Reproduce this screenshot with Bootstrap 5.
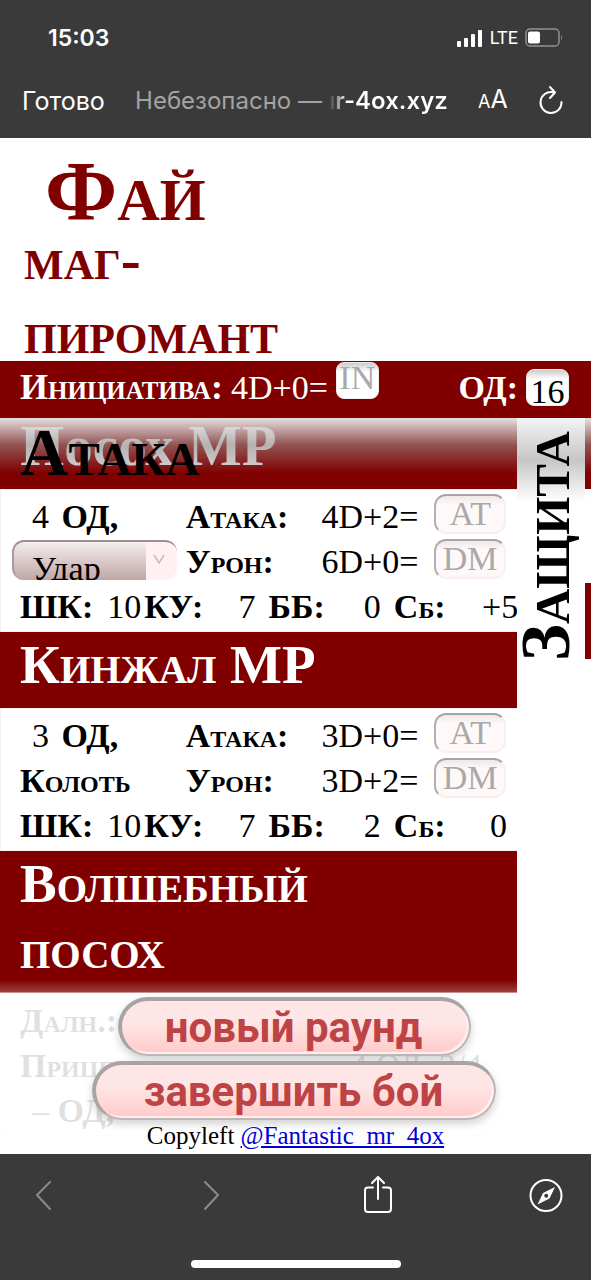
<!DOCTYPE html>
<html lang="ru">
<head>
<meta charset="utf-8">
<meta name="viewport" content="width=device-width, initial-scale=1">
<title>Фай</title>
<link href="https://cdn.jsdelivr.net/npm/bootstrap@5.3.0/dist/css/bootstrap.min.css" rel="stylesheet">
<style>
:root { --wine: #800000; --chrome: #3a3a3a; }
body { font-family: "Liberation Serif", serif; color: #000; background: #fff; line-height: 45px; font-size: 34px; }
.chrome { background: var(--chrome); color: #fff; font-family: Inter, sans-serif; line-height: 32px; }
.chrome svg { display: block; }
.chrome button { background: none; border: 0; padding: 0; color: inherit; }
.status { padding: 22px 28px 0 48px; }
.clock { font-size: 23px; font-weight: 600; }
.net { font-size: 18px; gap: 7px; font-family: Roboto, sans-serif; }
.address { padding: 29px 27px 20px 22px; font-size: 25px; }
.address .small-a { font-size: 18px; }
.insecure { color: #a3a3a3; font-size: 24px; }
.host { font-weight: 600; font-size: 24px; background: linear-gradient(90deg, #3a3a3a, #fff 18px); -webkit-background-clip: text; background-clip: text; color: transparent; }
.caps { font-variant: small-caps; font-weight: 700; }
.hero { font-size: 84px; line-height: 61px; padding: 23px 0 0 45px; color: var(--wine); }
.role { font-size: 60px; line-height: 74px; margin-bottom: -9px; padding-left: 24px; width: 50%; color: var(--wine); }
.wine-bar { background: var(--wine); color: #fff; }
.stats { position: relative; min-height: 57px; padding: 4px 22px 8px 20px; }
.init-label { font-size: 36px; }
.field { border: 2px solid #fbeeee; border-top-color: #a9a3a3; border-left-color: #b5afaf; border-radius: 12px; background: linear-gradient(#efe8e8, #fff8f8 9px); font: 34px/36px "Liberation Serif", serif; height: 40px; width: 100%; padding: 0; text-align: center; color: #000; display: block; }
.field::placeholder { color: #a9a9a9; opacity: 1; }
.field-sm { width: 43px; height: 37px; border: 1px solid #eee; border-radius: 8px; background: linear-gradient(#cfcaca, #fff 9px); }
.init-field { margin-top: -3px; padding-bottom: 5px; }
.od-field { margin-top: 4px; padding-top: 8px; }
.sheet { display: flex; overflow: hidden; }
.attack { width: 87.5%; flex: none; position: relative; }
.weapon { font-size: 55px; line-height: 66px; padding: 0 20px 10px; margin: 0; font-weight: 700; }
.weapon.caps { padding-right: 120px; }
.scrolled { margin-top: -5px; color: #d3d3d3; font-size: 57px; }
.pinned { position: absolute; top: 0; left: 0; right: 0; height: 71px; padding-left: 20px; font-size: 67px; line-height: 68px; z-index: 2; margin: 0; }
.veil { position: absolute; top: 0; left: 0; right: 0; height: 71px; background: linear-gradient(rgba(235,235,235,.95), rgba(160,150,150,.55) 38%, rgba(128,0,0,0) 78%); }
.sheet .veil { z-index: 1; }
.details { border: 1px solid #f3f0f0; border-right: 0; padding: 4px 11px 2px; }
.line { display: grid; height: 45px; align-items: start; white-space: nowrap; }
.line-a { grid-template-columns: 174fr 136fr 113fr 72fr; }
.line-b { grid-template-columns: minmax(0,87fr) minmax(0,37fr) minmax(0,94fr) minmax(0,30fr) minmax(0,95fr) minmax(0,30fr) minmax(0,88fr) minmax(0,24fr); padding-left: 8px; }
.cost { padding-left: 20px; }
.mode { height: 40px; margin-top: 1px; width: 165px; max-width: 100%; border: 0; border-top: 2px solid #9b8f8f; border-left: 2px solid #a89b9b; border-radius: 12px; appearance: none; font: 34px/44px "Liberation Serif", serif; color: #000; padding: 5px 0 0 18px; display: block;
  background: linear-gradient(#f6eded, #bfa6a6) left / 132px 100% no-repeat, #fff1f1; }
.mode-box { position: relative; }
.mode-box svg { position: absolute; left: 140px; top: 14px; }
.tab { width: 11.5%; flex: none; height: 248px; padding: 4px 0; position: relative; background: linear-gradient(#f4f4f4, #c6c6c6 42px, #fff 84px); }
.tab span { writing-mode: vertical-rl; transform: rotate(180deg); font-size: 70px; line-height: 58px; height: 239px; }
.peek { flex: 1; position: relative; }
.peek div { height: 71px; background: var(--wine); }
.peek div + div { margin-top: 94px; height: 76px; }
.dock { position: absolute; left: 0; right: 0; bottom: 0; height: 174px; padding: 17px 3px 0 0; z-index: 3; text-align: center; background: linear-gradient(rgba(255,255,255,0), rgba(255,255,255,.25) 12px, rgba(255,255,255,.88) 13px); }
.pill { display: block; margin: 0 auto; height: 59px; border: 4px solid #aaa3a3; border-right: 2px solid #bdb5b5; border-bottom: 2px solid #bdb5b5; border-radius: 30px; background: linear-gradient(#ffe6e6 40%, #ffc9c9); box-shadow: inset -2px -2px 1px #fff1f1, 0 4px 8px rgba(0,0,0,.18); color: #bd4345; font: 700 42px/50px Roboto, sans-serif; padding: 0 3px 0 0; }
.pill-a { width: 353px; }
.pill-b { width: 404px; margin-top: 5px; }
.credit { font-size: 25px; line-height: 32px; padding-left: 3px; }
.credit a { color: #0000d6; }
.tools { padding: 21px 26px 0 24px; height: 106px; }
.tools button { width: 38px; display: flex; justify-content: center; }
.home-bar { width: 210px; height: 8px; border-radius: 4px; background: #fff; margin: 0 auto 12px; }
</style>
</head>
<body class="d-flex flex-column vh-100 overflow-hidden">
<header class="chrome flex-shrink-0">
  <div class="status d-flex justify-content-between">
    <span class="clock">15:03</span>
    <span class="net d-flex align-items-center">
      <svg width="26" height="18" viewBox="0 0 26 18" fill="#fff"><rect x="0" y="12" width="4" height="6" rx="1"/><rect x="7" y="9" width="4" height="9" rx="1"/><rect x="14" y="5" width="4" height="13" rx="1"/><rect x="21" y="1" width="4" height="17" rx="1"/></svg>
      LTE
      <svg width="38" height="20" viewBox="0 0 38 20"><rect x="1" y="1" width="33" height="17" rx="4" fill="none" stroke="#929292" stroke-width="1.5"/><rect x="3" y="3.500" width="12" height="12" rx="2" fill="#fff"/><path d="M36 7q2 2.500 0 5z" fill="#929292"/></svg>
    </span>
  </div>
  <div class="address d-flex justify-content-between align-items-center text-nowrap">
    <button type="button">Готово</button>
    <span><span class="insecure">Небезопасно —</span> <span class="host">ır-4ox.xyz</span></span>
    <button type="button"><span class="small-a">A</span>A</button>
    <button type="button" aria-label="Обновить"><svg width="26" height="32" viewBox="0 0 26 32" fill="none" stroke="#fff" stroke-width="2" stroke-linecap="round" stroke-linejoin="round"><path d="M15 7.200A10.500 10.500 0 1 0 23.500 17M12 2l5 5.500-5 5.500"/></svg></button>
  </div>
</header>

<main class="flex-grow-1 position-relative overflow-hidden">
  <h1 class="hero caps m-0">Фай</h1>
  <p class="role caps mt-0">маг-пиромант</p>
  <div class="wine-bar stats d-flex align-items-start">
    <label for="init" class="init-label caps text-nowrap">Инициатива:</label>
    <span class="ms-2">4D+0=</span>
    <input id="init" class="field field-sm init-field ms-2" placeholder="IN">
    <label for="od" class="fw-bold ms-auto me-2">ОД:</label>
    <input id="od" class="field field-sm od-field" value="16">
  </div>

  <div class="sheet">
    <section class="attack">
      <h3 class="weapon wine-bar scrolled">Посох МР</h3>
      <div class="veil"></div>
      <h2 class="pinned caps">Атака</h2>
      <div class="details">
        <div class="line line-a"><span class="cost">4 <b class="ms-1">ОД,</b></span><label class="caps" for="at1">Атака:</label><span>4D+2=</span><input id="at1" class="field" placeholder="AT"></div>
        <div class="line line-a"><span class="mode-box"><select class="mode" aria-label="Приём"><option>Удар</option></select><svg width="14" height="12" viewBox="0 0 14 12" fill="none" stroke="#c9bcbc" stroke-width="1.500"><path d="M2 2l5 8 5-8"/></svg></span><label class="caps" for="dm1">Урон:</label><span>6D+0=</span><input id="dm1" class="field" placeholder="DM"></div>
        <div class="line line-b"><b>ШК:</b><span>10</span><b>КУ:</b><span>7</span><b>ББ:</b><span>0</span><span class="caps">Сб:</span><span>+5</span></div>
      </div>
      <h3 class="weapon caps wine-bar">Кинжал МР</h3>
      <div class="details">
        <div class="line line-a"><span class="cost">3 <b class="ms-1">ОД,</b></span><label class="caps" for="at2">Атака:</label><span>3D+0=</span><input id="at2" class="field" placeholder="AT"></div>
        <div class="line line-a"><span class="caps ps-2">Колоть</span><label class="caps" for="dm2">Урон:</label><span>3D+2=</span><input id="dm2" class="field" placeholder="DM"></div>
        <div class="line line-b"><b>ШК:</b><span>10</span><b>КУ:</b><span>7</span><b>ББ:</b><span>2</span><span class="caps">Сб:</span><span class="ps-2">0</span></div>
      </div>
      <h3 class="weapon caps wine-bar">Волшебный посох</h3>
      <div class="details">
        <div class="caps ps-2">Далн.:</div>
        <div class="ps-2 d-flex justify-content-between pe-4"><span class="caps">Прицеливание:</span><span>4 ОД, 2/4</span></div>
        <div class="cost">– <b>ОД,</b></div>
      </div>
    </section>
    <div class="tab"><span class="caps d-block">Защита</span></div>
    <div class="peek"><div></div><div></div><span class="veil"></span></div>
  </div>

  <footer class="dock">
    <button type="button" class="pill pill-a">новый раунд</button>
    <button type="button" class="pill pill-b">завершить бой</button>
    <div class="credit">Copyleft <a href="#">@Fantastic_mr_4ox</a></div>
  </footer>
</main>

<nav class="chrome flex-shrink-0">
  <div class="tools d-flex justify-content-between align-items-start">
    <button type="button" aria-label="Назад"><svg width="20" height="40" viewBox="0 0 20 40" fill="none" stroke="#8b8b8b" stroke-width="2" stroke-linecap="round" stroke-linejoin="round"><path d="M17 7L4 20l13 14"/></svg></button>
    <button type="button" aria-label="Вперёд"><svg width="20" height="40" viewBox="0 0 20 40" fill="none" stroke="#8b8b8b" stroke-width="2" stroke-linecap="round" stroke-linejoin="round"><path d="M4 7l13 13L4 34"/></svg></button>
    <button type="button" aria-label="Поделиться"><svg width="32" height="40" viewBox="0 0 32 40" fill="none" stroke="#fff" stroke-width="2" stroke-linecap="round" stroke-linejoin="round"><path d="M11 12.500H6a3 3 0 0 0-3 3V34a3 3 0 0 0 3 3h20a3 3 0 0 0 3-3V15.500a3 3 0 0 0-3-3h-5M16 24V2.500M10 8l6-6 6 6"/></svg></button>
    <button type="button" aria-label="Открыть в Safari"><svg width="38" height="40" viewBox="0 0 38 40"><circle cx="19" cy="20.500" r="15.500" fill="none" stroke="#fff" stroke-width="2"/><path fill="#fff" fill-rule="evenodd" d="M28 12L22.500 23.500 10.500 29.500 16 18zM19.200 18.800a2 2 0 1 0 .1 0z"/></svg></button>
  </div>
  <div class="home-bar"></div>
</nav>
<script src="https://cdn.jsdelivr.net/npm/bootstrap@5.3.0/dist/js/bootstrap.bundle.min.js"></script>
</body>
</html>
